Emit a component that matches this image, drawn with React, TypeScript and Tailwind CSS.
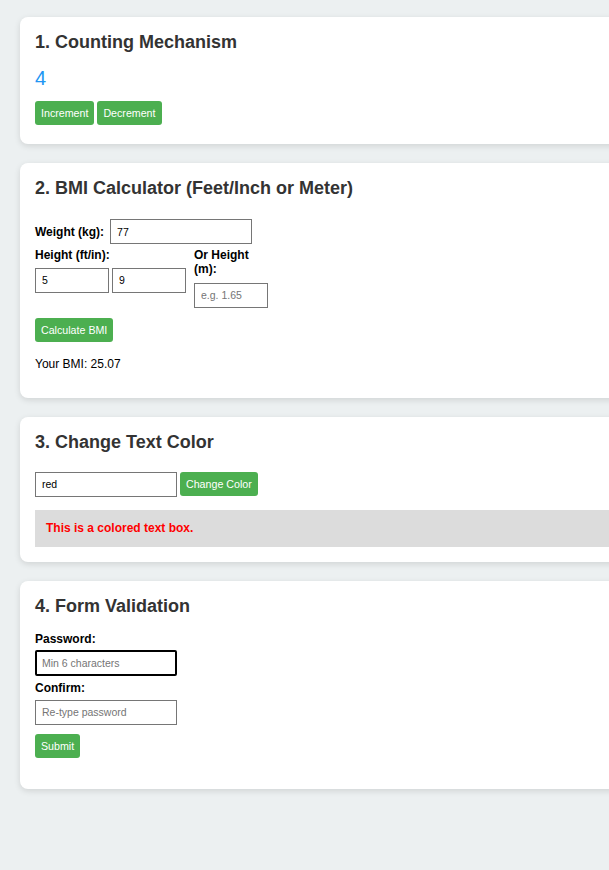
import { useState } from "react";

const inputCls =
  "h-[25px] border border-[#767676] bg-white px-[6px] text-[10.5px] text-black placeholder:text-[#757575] outline-none";

const btnCls =
  "h-[24px] rounded-[3px] bg-[#4CAF50] px-[6px] text-[10.67px] font-normal text-white";

const Card = ({ title, children }: { title: string; children: React.ReactNode }) => (
  <section className="mb-[19px] w-[640px] rounded-lg bg-white p-[15px] shadow-[0_2px_6px_rgba(0,0,0,0.12)]">
    <h2 className="text-[18px] font-bold leading-[20px] text-[#333]">{title}</h2>
    {children}
  </section>
);

export default function App() {
  const [count, setCount] = useState(4);
  const [weight, setWeight] = useState("77");
  const [feet, setFeet] = useState("5");
  const [inch, setInch] = useState("9");
  const [meters, setMeters] = useState("");
  const [bmi, setBmi] = useState("25.07");
  const [colorInput, setColorInput] = useState("red");
  const [color, setColor] = useState("red");

  const calcBmi = () => {
    const w = parseFloat(weight);
    let h = parseFloat(meters);
    if (!h) h = ((parseFloat(feet) || 0) * 12 + (parseFloat(inch) || 0)) * 0.0254;
    if (w && h) setBmi((w / (h * h)).toFixed(2));
  };

  return (
    <div className="min-h-screen overflow-hidden bg-[#ecf0f1] pl-[20px] pt-[17px] font-['Liberation_Sans',Arial,sans-serif] text-black">
      <Card title="1. Counting Mechanism">
        <div className="mt-[15px] text-[20px] leading-[22px] text-[#2196F3]">{count}</div>
        <div className="mt-[12px] mb-[4px] flex gap-[3px]">
          <button className={btnCls} onClick={() => setCount(count + 1)}>
            Increment
          </button>
          <button className={btnCls} onClick={() => setCount(count - 1)}>
            Decrement
          </button>
        </div>
      </Card>

      <Card title="2. BMI Calculator (Feet/Inch or Meter)">
        <div className="mt-[21px] flex items-center gap-[6px]">
          <label className="text-[12px] font-bold leading-[14px]">Weight (kg):</label>
          <input
            className={`${inputCls} w-[142px]`}
            value={weight}
            onChange={(e) => setWeight(e.target.value)}
          />
        </div>
        <div className="mt-[5px] flex items-start gap-[8px]">
          <div>
            <div className="mb-[5px] text-[12px] font-bold leading-[13.5px]">Height (ft/in):</div>
            <div className="flex gap-[3px]">
              <input
                className={`${inputCls} w-[74px]`}
                value={feet}
                onChange={(e) => setFeet(e.target.value)}
              />
              <input
                className={`${inputCls} w-[74px]`}
                value={inch}
                onChange={(e) => setInch(e.target.value)}
              />
            </div>
          </div>
          <div className="w-[74px]">
            <div className="mb-[6px] text-[12px] font-bold leading-[13.5px]">Or Height (m):</div>
            <input
              className={`${inputCls} w-[74px]`}
              placeholder="e.g. 1.65"
              value={meters}
              onChange={(e) => setMeters(e.target.value)}
            />
          </div>
        </div>
        <button className={`${btnCls} mt-[10px]`} onClick={calcBmi}>
          Calculate BMI
        </button>
        <p className="mt-[15px] mb-[12px] text-[12px] leading-[14px]">Your BMI: {bmi}</p>
      </Card>

      <Card title="3. Change Text Color">
        <div className="mt-[20px] flex items-center gap-[3px]">
          <input
            className={`${inputCls} w-[142px]`}
            value={colorInput}
            onChange={(e) => setColorInput(e.target.value)}
          />
          <button className={`${btnCls} h-[23px]`} onClick={() => setColor(colorInput)}>
            Change Color
          </button>
        </div>
        <div className="mt-[13px] bg-[#dcdcdc] px-[11px] py-[11.5px]">
          <p className="text-[12px] font-bold leading-[14px]" style={{ color }}>
            This is a colored text box.
          </p>
        </div>
      </Card>

      <Card title="4. Form Validation">
        <div className="mt-[16px] text-[12px] font-bold leading-[14px]">Password:</div>
        <input
          type="password"
          autoFocus
          className="mt-[4px] h-[26px] w-[142px] rounded-[2px] border-2 border-black bg-white px-[5px] text-[10.5px] text-black outline-none placeholder:text-[#757575]"
          placeholder="Min 6 characters"
        />
        <div className="mt-[5px] text-[12px] font-bold leading-[14px]">Confirm:</div>
        <input
          type="password"
          className={`${inputCls} mt-[5px] block w-[142px]`}
          placeholder="Re-type password"
        />
        <button className={`${btnCls} mt-[9px] mb-[16px] block`}>Submit</button>
      </Card>
    </div>
  );
}
